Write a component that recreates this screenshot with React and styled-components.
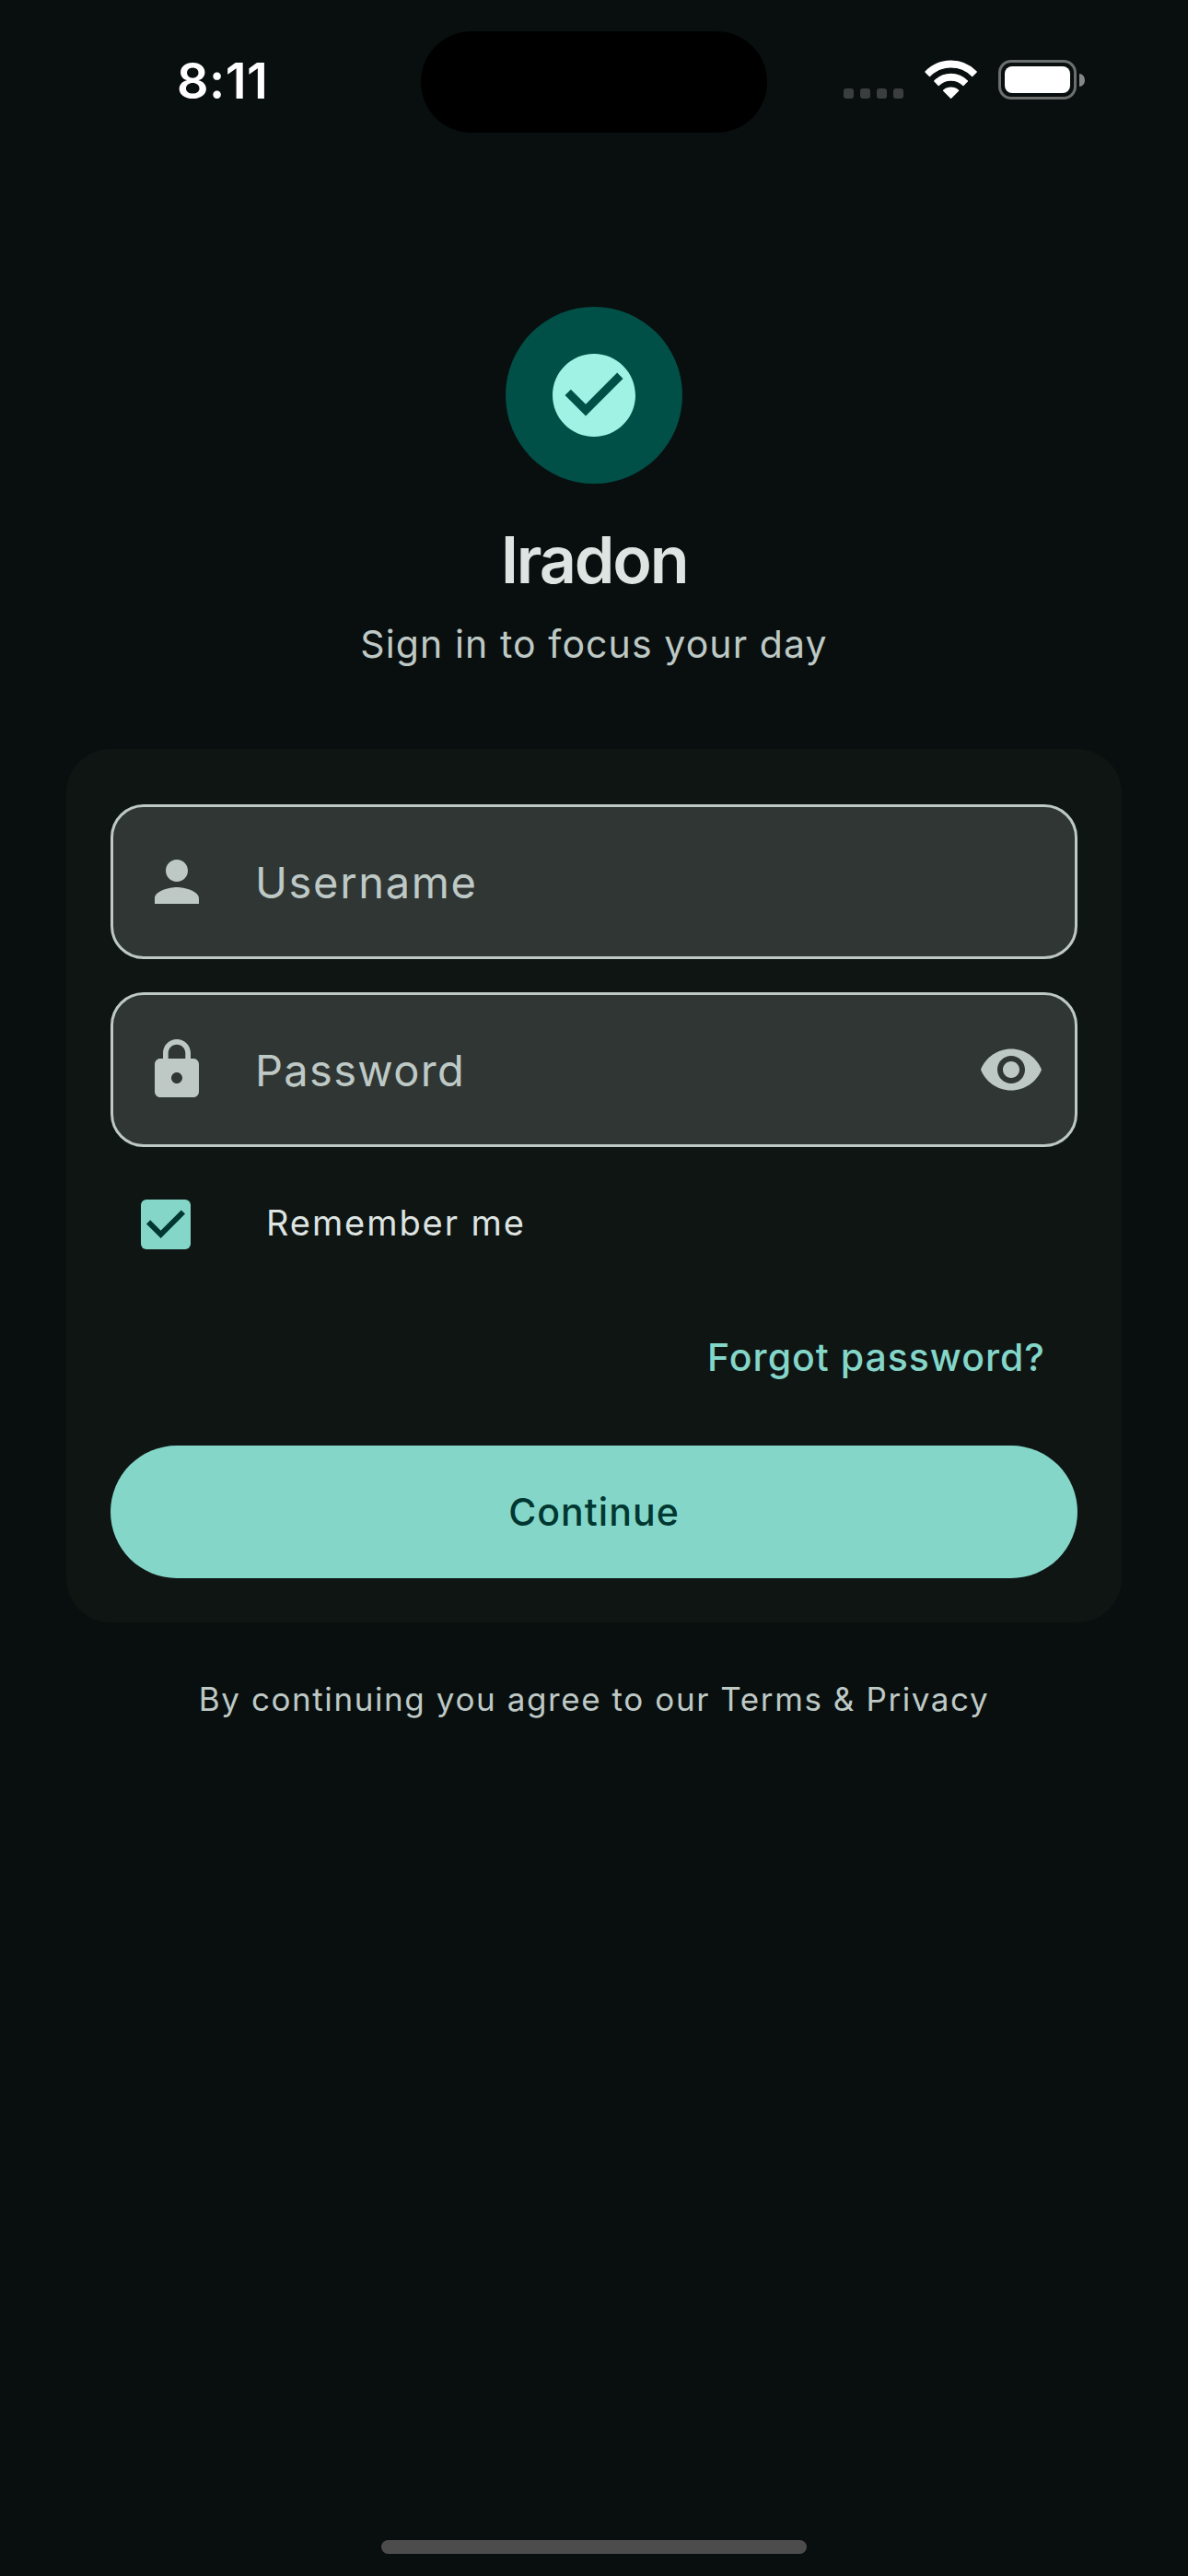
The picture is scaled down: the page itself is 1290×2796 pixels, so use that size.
import React from "react";
import styled, { createGlobalStyle } from "styled-components";
import { MdCheckCircle, MdLock, MdPerson, MdVisibility } from "react-icons/md";

const color = {
  page: "#090f0e",
  card: "#0f1513",
  field: "#303634",
  text: "#dde4e1",
  muted: "#bec9c6",
  primary: "#84d6c9",
  onPrimary: "#003731",
  badge: "#005048",
  onBadge: "#a0f2e4",
};

const GlobalStyle = createGlobalStyle`
  * { box-sizing: border-box; }
  body {
    margin: 0;
    background: ${color.page};
    font-family: "Inter", "Liberation Sans", sans-serif;
  }
`;

const Screen = styled.div`
  display: flex;
  flex-direction: column;
  width: 1290px;
  height: 2796px;
  overflow: hidden;
  background: ${color.page};
`;

const StatusBar = styled.header`
  display: grid;
  grid-template-columns: 457px 376px 1fr;
  height: 144px;
  padding-top: 34px;
`;

const Time = styled.div`
  padding-left: 192px;
  color: #fff;
  font-size: 54px;
  font-weight: 600;
  letter-spacing: 0.5px;
  line-height: 108px;
`;

const Island = styled.div`
  height: 110px;
  border-radius: 55px;
  background: #000;
`;

const Indicators = styled.div`
  display: flex;
  align-items: flex-end;
  height: 74px;
  padding-left: 83px;
`;

const Signal = styled.div`
  display: flex;
  gap: 7px;
  padding-bottom: 1px;
`;

const SignalDot = styled.span`
  width: 11px;
  height: 11px;
  border-radius: 3px;
  background: #3a3f3e;
`;

const WifiIcon = styled.svg`
  width: 58px;
  height: 43px;
  margin-left: 23px;
  fill: #fff;
  stroke: #fff;
  stroke-width: 1.4;
  stroke-linejoin: round;
`;

const Battery = styled.div`
  display: flex;
  align-items: center;
  gap: 3px;
  margin-left: 22px;
`;

const BatteryShell = styled.div`
  width: 85px;
  height: 43px;
  padding: 4px;
  border: 3px solid #6b6f6e;
  border-radius: 14px;
`;

const BatteryLevel = styled.div`
  height: 29px;
  border-radius: 8px;
  background: #fff;
`;

const BatteryTip = styled.div`
  width: 6px;
  height: 14px;
  border-radius: 0 6px 6px 0 / 0 7px 7px 0;
  background: #858887;
`;

const Main = styled.main`
  display: flex;
  flex-direction: column;
  align-items: center;
  padding: 189px 72px 0;
`;

const Badge = styled.div`
  display: grid;
  place-items: center;
  width: 192px;
  height: 192px;
  border-radius: 50%;
  background: ${color.badge};
  color: ${color.onBadge};
  font-size: 108px;

  svg { display: block; }
`;

const Title = styled.h1`
  margin: 34px 0 0;
  color: ${color.text};
  font-size: 70px;
  font-weight: 600;
  letter-spacing: -2.2px;
  line-height: 97px;
`;

const Subtitle = styled.p`
  margin: 12px 0 0;
  color: ${color.muted};
  font-size: 41px;
  letter-spacing: 1.1px;
  line-height: 62px;
`;

const Card = styled.section`
  display: flex;
  flex-direction: column;
  width: 100%;
  margin-top: 83px;
  padding: 60px 48px 48px;
  border-radius: 48px;
  background: ${color.card};
`;

const Fields = styled.div`
  display: grid;
  gap: 36px;
`;

const Field = styled.label`
  display: flex;
  align-items: center;
  height: 168px;
  padding: 0 33px;
  border: 3px solid ${color.muted};
  border-radius: 36px;
  background: ${color.field};
  color: ${color.muted};

  svg {
    flex: none;
    font-size: 72px;
  }
`;

const FieldLabel = styled.span`
  flex: 1;
  padding-top: 2px;
  padding-left: 49px;
  font-size: 47px;
  letter-spacing: ${(p) => p.$tracking}px;
  line-height: 72px;
`;

const RememberRow = styled.label`
  display: flex;
  align-items: center;
  gap: 82px;
  height: 144px;
  margin-top: 12px;
  padding-left: 33px;
`;

const Checkbox = styled.span`
  width: 54px;
  height: 54px;
  border-radius: 6px;
  background: ${color.primary};

  svg {
    display: block;
    fill: none;
    stroke: ${color.onPrimary};
    stroke-width: 6;
  }
`;

const RememberText = styled.span`
  padding-bottom: 4px;
  color: ${color.text};
  font-size: 38px;
  letter-spacing: 1.92px;
  line-height: 60px;
`;

const ForgotLink = styled.a`
  align-self: flex-end;
  height: 144px;
  padding-right: 35px;
  color: ${color.primary};
  font-size: 41px;
  font-weight: 500;
  letter-spacing: 1px;
  line-height: 145px;
`;

const ContinueButton = styled.button`
  height: 144px;
  margin-top: 24px;
  padding: 0;
  border: 0;
  border-radius: 72px;
  background: ${color.primary};
  color: ${color.onPrimary};
  font-family: inherit;
  font-size: 41px;
  font-weight: 500;
  letter-spacing: 1.06px;
  line-height: 144px;
`;

const Terms = styled.p`
  margin: 58px 0 0;
  color: ${color.muted};
  font-size: 35px;
  letter-spacing: 1.59px;
  line-height: 51px;
  white-space: nowrap;
`;

const HomeIndicator = styled.div`
  align-self: center;
  width: 462px;
  height: 15px;
  margin: auto 0 24px;
  border-radius: 8px;
  background: #4c4c4c;
`;

export default function App() {
  return (
    <Screen>
      <GlobalStyle />
      <StatusBar>
        <Time>8:11</Time>
        <Island />
        <Indicators>
          <Signal>
            {[0, 1, 2, 3].map((n) => (
              <SignalDot key={n} />
            ))}
          </Signal>
          <WifiIcon viewBox="0 0 58 43">
            <path d="M1 12.9A38.5 38.5 0 0 1 56.2 12.9L51.7 17.5A32.6 32.6 0 0 0 5.5 17.5Z" />
            <path d="M10.8 23.1A24.6 24.6 0 0 1 46.4 23.1L42 27.6A19 19 0 0 0 15.2 27.6Z" />
            <path d="M20.6 33.3A12 12 0 0 1 36.6 33.3L28.6 41.3Z" />
          </WifiIcon>
          <Battery>
            <BatteryShell>
              <BatteryLevel />
            </BatteryShell>
            <BatteryTip />
          </Battery>
        </Indicators>
      </StatusBar>
      <Main>
        <Badge>
          <MdCheckCircle />
        </Badge>
        <Title>Iradon</Title>
        <Subtitle>Sign in to focus your day</Subtitle>
        <Card>
          <Fields>
            <Field>
              <MdPerson />
              <FieldLabel $tracking={1.65}>Username</FieldLabel>
            </Field>
            <Field>
              <MdLock />
              <FieldLabel $tracking={1.32}>Password</FieldLabel>
              <MdVisibility />
            </Field>
          </Fields>
          <RememberRow>
            <Checkbox>
              <svg width="54" height="54" viewBox="0 0 54 54">
                <path d="M8.1 24.3L21.6 37.8L45.9 13.5" />
              </svg>
            </Checkbox>
            <RememberText>Remember me</RememberText>
          </RememberRow>
          <ForgotLink>Forgot password?</ForgotLink>
          <ContinueButton>Continue</ContinueButton>
        </Card>
        <Terms>By continuing you agree to our Terms &amp; Privacy</Terms>
      </Main>
      <HomeIndicator />
    </Screen>
  );
}
